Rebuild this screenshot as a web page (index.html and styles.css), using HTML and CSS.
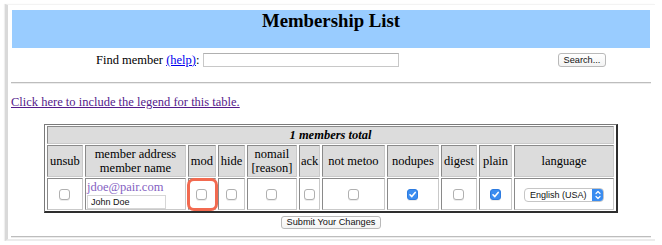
FILE: index.html
```html
<!DOCTYPE html>
<html lang="en">
<head>
  <meta charset="UTF-8">
  <title>Membership List</title>
  <meta name="viewport" content="width=device-width, initial-scale=1.0">
  <link rel="stylesheet" href="styles.css">
</head>
<body>
  <div class="frame">
    <div class="banner"><h2>Membership List</h2></div>

    <div class="find-row">
      <span class="find-label">Find member <a href="#" class="help">(help)</a>:</span>
      <input class="find-input" type="text">
      <button class="btn search">Search...</button>
    </div>
    <hr>

    <p class="legend"><a href="#">Click here to include the legend for this table.</a></p>

    <table class="members">
      <colgroup>
        <col style="width:36px"><col style="width:101px"><col style="width:28px"><col style="width:27px">
        <col style="width:50px"><col style="width:21px"><col style="width:63px"><col style="width:52px">
        <col style="width:36px"><col style="width:33px"><col style="width:100px">
      </colgroup>
      <tr class="total-row">
        <td colspan="11"><em>1 members total</em></td>
      </tr>
      <tr class="heads">
        <th>unsub</th>
        <th>member address<br>member name</th>
        <th>mod</th>
        <th>hide</th>
        <th>nomail<br>[reason]</th>
        <th>ack</th>
        <th>not metoo</th>
        <th>nodupes</th>
        <th>digest</th>
        <th>plain</th>
        <th>language</th>
      </tr>
      <tr class="data">
        <td><span class="cb"></span></td>
        <td class="member">
          <a href="#" class="addr">jdoe@pair.com</a>
          <input class="name-input" type="text" value="John Doe">
        </td>
        <td class="mod"><span class="cb"></span><span class="mark"></span></td>
        <td><span class="cb"></span></td>
        <td><span class="cb"></span></td>
        <td><span class="cb"></span></td>
        <td><span class="cb"></span></td>
        <td><span class="cb on"><svg viewBox="0 0 11 11" width="11" height="11"><path d="M3 5.8 L4.8 7.6 L8.2 3.4" fill="none" stroke="#fff" stroke-width="1.6" stroke-linecap="round" stroke-linejoin="round"/></svg></span></td>
        <td><span class="cb"></span></td>
        <td><span class="cb on"><svg viewBox="0 0 11 11" width="11" height="11"><path d="M3 5.8 L4.8 7.6 L8.2 3.4" fill="none" stroke="#fff" stroke-width="1.6" stroke-linecap="round" stroke-linejoin="round"/></svg></span></td>
        <td>
          <div class="select">
            <span class="select-text">English (USA)</span>
            <span class="stepper"><svg viewBox="0 0 12 14" width="12" height="14"><path d="M4 5.5 L6 3.5 L8 5.5 M4 8.5 L6 10.5 L8 8.5" fill="none" stroke="#fff" stroke-width="1.2" stroke-linecap="round" stroke-linejoin="round"/></svg></span>
          </div>
        </td>
      </tr>
    </table>

    <div class="submit-row"><button class="btn submit">Submit Your Changes</button></div>
    <hr>
  </div>
</body>
</html>
```

FILE: styles.css
```css
* {
  box-sizing: border-box;
}
html, body {
  margin: 0;
  padding: 0;
  background: #fff;
}
body {
  font-family: "Liberation Serif", "Times New Roman", serif;
  font-size: 12.5px;
  color: #000;
}

.frame {
  margin: 4px 0 0 5px;
  width: 650px;
  padding: 5px 4px 1px 3px;
  border-top: 1px solid #f3f3f3;
  border-left: 3px solid #d9d9d9;
  border-bottom: 2px solid #ececec;
  box-shadow: -1px 0 1px #efefef;
}

.banner {
  margin: 0 1px;
  height: 38px;
  background: #99ccff;
  text-align: center;
}
.banner h2 {
  margin: 0;
  font-size: 18.75px;
  line-height: 22px;
  font-weight: bold;
}

.find-row {
  margin-top: 3px;
  height: 18px;
  display: flex;
  align-items: center;
  padding-left: 85px;
  line-height: 18px;
}
.help {
  color: #0000ee;
}
.find-input {
  margin-left: 4px;
  width: 196px;
  height: 14px;
  border: 1px solid #c8c8c8;
  border-top-color: #b0b0b0;
  padding: 0;
  background: #fff;
}

.btn {
  font-family: "Liberation Sans", Arial, sans-serif;
  font-size: 9.2px;
  color: #111;
  background: linear-gradient(#fff, #f3f3f3);
  border: 1px solid #b9b9b9;
  border-radius: 3px;
  padding: 0;
  line-height: 11px;
}
.search {
  margin-left: auto;
  margin-right: 45px;
  width: 48px;
  height: 14px;
}

hr {
  margin: 13px 0 0;
  height: 0;
  border: 0;
  border-top: 1px solid #bdbdbd;
  border-bottom: 1px solid #ececec;
}

.legend {
  margin: 10px 0 0;
  line-height: 16px;
}
.legend a {
  color: #551a8b;
}

.members {
  margin: 14px auto 0;
  width: 574px;
  table-layout: fixed;
  border-collapse: separate;
  border-spacing: 2px 1px;
  border-style: solid;
  border-width: 1px 2px 2px 1px;
  border-color: #7a7a7a #2e2e2e #2e2e2e #7a7a7a;
}
.members td, .members th {
  border: 1px solid;
  border-color: #8a8a8a #c9c9c9 #c9c9c9 #8a8a8a;
  padding: 0 1px;
  text-align: center;
  vertical-align: middle;
}
.total-row td {
  height: 18px;
  background: #dcdcdc;
  font-weight: bold;
  line-height: 15px;
}
.heads th {
  height: 32px;
  background: #dcdcdc;
  font-weight: normal;
  line-height: 14px;
  white-space: nowrap;
}
.data td {
  height: 32px;
  background: #fff;
}

.cb {
  display: inline-block;
  width: 11px;
  height: 11px;
  border: 1px solid #b0b0b0;
  border-radius: 3px;
  background: #fff;
  vertical-align: middle;
  box-shadow: 0 1px 0 #ececec;
}
.cb.on {
  background: #3a8cf0;
  border-color: #2d7be0;
}
.cb svg {
  display: block;
  margin: -1px 0 0 -1px;
}

.data td.member {
  text-align: left;
  padding: 0 1px;
}
.addr {
  display: block;
  color: #8462c2;
  text-decoration: none;
  line-height: 14px;
}
.name-input {
  display: block;
  margin-top: 1px;
  width: 79px;
  height: 14px;
  padding: 0 3px;
  border: 1px solid #d6d6d6;
  font-family: "Liberation Sans", Arial, sans-serif;
  font-size: 9px;
  color: #111;
  background: #fff;
}

.data td.mod {
  position: relative;
}
.mark {
  position: absolute;
  top: -1px;
  bottom: -2px;
  left: -2px;
  right: -3px;
  border: 3px solid #f26a50;
  border-radius: 7px;
}

.select {
  display: inline-flex;
  align-items: center;
  width: 80px;
  height: 14px;
  border: 1px solid #c6c6c6;
  border-radius: 4px;
  background: #fff;
  overflow: hidden;
  vertical-align: middle;
}
.select-text {
  flex: 1;
  padding-left: 5px;
  text-align: left;
  font-family: "Liberation Sans", Arial, sans-serif;
  font-size: 9px;
  line-height: 12px;
  color: #111;
}
.stepper {
  width: 12px;
  height: 14px;
  margin: -1px -1px -1px 0;
  background: #3a8cf0;
  border-radius: 0 4px 4px 0;
}
.stepper svg {
  display: block;
}

.submit-row {
  margin-top: 3px;
  text-align: center;
  line-height: 0;
}
.submit {
  width: 100px;
  height: 13px;
}
.submit-row + hr {
  margin-top: 7px;
}
```
